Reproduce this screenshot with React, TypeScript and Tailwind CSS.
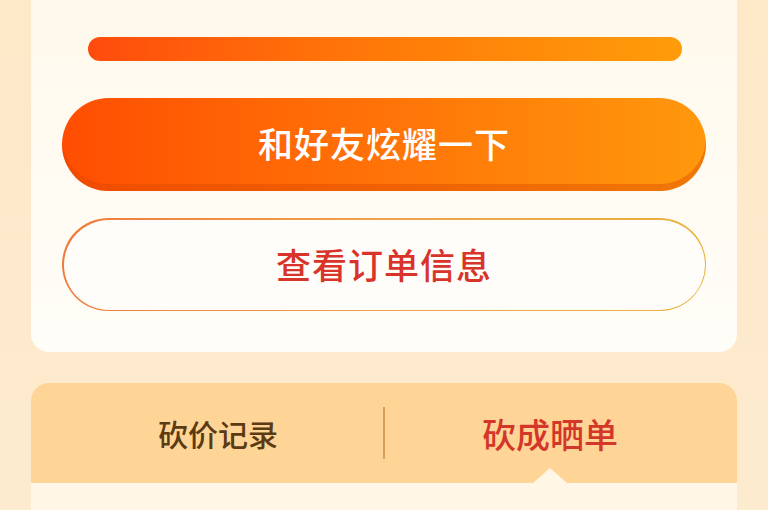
export default function App() {
  return (
    <div
      className="h-[510px] w-[768px] overflow-hidden bg-gradient-to-b from-[#fde8c8] to-[#fdebcf] px-[31px]"
      style={{ fontFamily: '"Noto Sans CJK SC", "Noto Sans", sans-serif' }}
    >
      <div className="flex h-[352px] flex-col rounded-b-[18px] bg-gradient-to-b from-[#fff9ec] to-[#fffdf8] pt-[37px]">
        <div className="mx-[57px] mr-[55px] h-[24px] rounded-full bg-gradient-to-r from-[#ff4b0c] via-[#ff7a08] to-[#ff9c0a]" />
        <button
          type="button"
          className="mx-[31px] mt-[37px] flex h-[93px] items-center justify-center rounded-full bg-gradient-to-r from-[#ff4d02] via-[#ff7308] to-[#ff980c] pb-[2px] text-[35px] font-medium tracking-[1px] text-white shadow-[inset_0_-7px_0_rgba(214,70,0,0.4)]"
        >
          和好友炫耀一下
        </button>
        <div className="mx-[31px] mt-[27px] rounded-full bg-gradient-to-r from-[#f07a3c] via-[#eea24a] to-[#e8b23e] p-[1.5px]">
          <div className="flex h-[90px] items-center justify-center rounded-full bg-[#fffdf9] text-[35px] font-medium tracking-[1px] text-[#d8342a]">
            查看订单信息
          </div>
        </div>
      </div>

      <div className="mt-[31px] overflow-hidden rounded-t-[18px]">
        <div className="flex h-[100px] items-center bg-[#fed596]">
          <div className="flex flex-1 items-center justify-center pl-[22px] text-[30px] font-medium text-[#5b3a14]">
            砍价记录
          </div>
          <div className="h-[52px] w-[2px] bg-[#d9a05a]" />
          <div className="relative flex h-full flex-1 items-center justify-center pr-[22px] text-[34px] font-medium text-[#d4372a]">
            砍成晒单
            <div className="absolute bottom-0 left-[calc(50%-11px)] h-0 w-0 -translate-x-1/2 border-x-[17px] border-b-[15px] border-x-transparent border-b-[#fff6e6]" />
          </div>
        </div>
        <div className="h-[40px] bg-[#fff6e6]" />
      </div>
    </div>
  );
}
